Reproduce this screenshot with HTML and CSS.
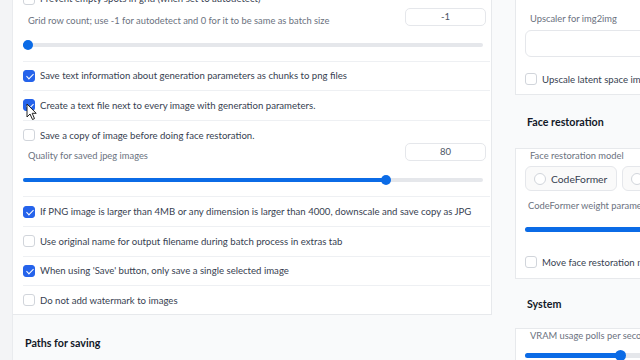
FILE: index.html
```html
<!DOCTYPE html>
<html>
<head>
<meta charset="utf-8">
<link rel="stylesheet" href="styles.css">
</head>
<body>
<div class="page">
  <div class="rail"></div>
  <div class="leftcol">
    <div class="box">
      <div class="row first"><span class="cb"></span><span class="txt">Prevent empty spots in grid (when set to autodetect)</span></div>
      <div class="sblock">
        <div class="shead"><span class="slabel">Grid row count; use -1 for autodetect and 0 for it to be same as batch size</span><span class="num">-1</span></div>
        <div class="track"><div class="fill" style="width:5px"></div><div class="thumb" style="left:0px"></div></div>
      </div>
      <div class="row line"><span class="cb on"></span><span class="txt">Save text information about generation parameters as chunks to png files</span></div>
      <div class="row line"><span class="cb on"></span><span class="txt">Create a text file next to every image with generation parameters.</span>
        <svg class="cursor" width="12" height="18" viewBox="0 0 12 18"><path d="M1 1 L1 14 L4 11 L6.5 16.5 L8.5 15.6 L6.2 10.3 L10.2 10.3 Z" fill="#fff" stroke="#222" stroke-width="1" stroke-linejoin="round"/></svg>
      </div>
      <div class="row line"><span class="cb"></span><span class="txt">Save a copy of image before doing face restoration.</span></div>
      <div class="sblock">
        <div class="shead"><span class="slabel">Quality for saved jpeg images</span><span class="num">80</span></div>
        <div class="track"><div class="fill" style="width:363px"></div><div class="thumb" style="left:358px"></div></div>
      </div>
      <div class="row line"><span class="cb on"></span><span class="txt">If PNG image is larger than 4MB or any dimension is larger than 4000, downscale and save copy as JPG</span></div>
      <div class="row line"><span class="cb"></span><span class="txt">Use original name for output filename during batch process in extras tab</span></div>
      <div class="row line"><span class="cb on"></span><span class="txt">When using 'Save' button, only save a single selected image</span></div>
      <div class="row line"><span class="cb"></span><span class="txt">Do not add watermark to images</span></div>
    </div>
    <div class="sect lsect">Paths for saving</div>
  </div>
  <div class="gap"></div>
  <div class="rightcol">
    <div class="panel p1">
      <div class="plabel">Upscaler for img2img</div>
      <div class="dropdown"></div>
      <div class="prow"><span class="cb"></span><span class="txt">Upscale latent space image when doing hires. fix</span></div>
    </div>
    <div class="sect s1">Face restoration</div>
    <div class="panel p2">
      <div class="plabel">Face restoration model</div>
      <div class="radios">
        <div class="radio"><span class="dot"></span><span class="txt">CodeFormer</span></div>
        <div class="radio"><span class="dot"></span><span class="txt">GFPGAN</span></div>
      </div>
      <div class="plabel wl">CodeFormer weight parameter; 0 = maximum effect; 1 = minimum effect</div>
      <div class="ptrack"><div class="pfill" style="width:150px"></div></div>
      <div class="prow mv"><span class="cb"></span><span class="txt">Move face restoration model from VRAM into RAM after processing</span></div>
    </div>
    <div class="sect s2">System</div>
    <div class="panel p3">
      <div class="plabel">VRAM usage polls per second during generation. Set to 0 to disable.</div>
      <div class="ptrack"><div class="pfill" style="width:96px"></div><div class="pthumb" style="left:90px"></div></div>
    </div>
  </div>
</div>
</body>
</html>
```
FILE: styles.css
```css
* { box-sizing: border-box; }
html, body { margin: 0; padding: 0; }
body {
  width: 640px; height: 360px; overflow: hidden;
  background: #f9fafb;
  font-family: Lato, "Liberation Sans", sans-serif;
  font-size: 9.6px;
  color: #374151;
}
.page { display: flex; height: 360px; }
.rail { width: 13px; flex: none; background: #f3f4f6; border-right: 1px solid #e9ebee; }
.leftcol { width: 479px; flex: none; }
.box {
  background: #fff;
  border-right: 1px solid #e7e9ec;
  border-bottom: 1px solid #e7e9ec;
  margin-top: -16px;
  padding: 0 0 0 10px;
  height: 331px;
}
.row {
  height: 29.6px; display: flex; align-items: center; position: relative;
  margin-right: 1px;
}
.row.line { border-top: 1px solid #eef0f3; }
.row .txt { margin-left: 5px; white-space: nowrap; }
.cb {
  width: 12px; height: 12px; flex: none;
  border: 1px solid #d1d5db; border-radius: 3px; background: #fff;
  position: relative;
}
.cb.on { background: #2563eb; border-color: #2563eb; }
.cb.on::after {
  content: ""; position: absolute; left: 3.5px; top: 1.2px;
  width: 3px; height: 6px; border: solid #fff; border-width: 0 1.6px 1.6px 0;
  transform: rotate(45deg);
}
.cursor { position: absolute; left: 3px; top: 12px; }
.sblock { height: 47px; padding: 0 8px 0 0; }
.shead { display: flex; align-items: flex-start; justify-content: space-between; height: 25px; padding-left: 5px; }
.slabel { color: #6b7280; font-size: 9.35px; line-height: 14px; white-space: nowrap; }
.num {
  width: 81px; height: 18px; margin-top: -6px; margin-right: -3px;
  border: 1px solid #e5e7eb; border-radius: 5px; background: #fff;
  text-align: center; line-height: 16px; color: #4b5563; font-size: 9.5px;
}
.track {
  position: relative; height: 4px; margin: 4px 0 0 0; width: 460px;
  background: #e5e7eb; border-radius: 2px;
}
.fill { position: absolute; left: 0; top: 0; bottom: 0; background: #0b6be6; border-radius: 2px; }
.thumb {
  position: absolute; top: -3px; width: 10px; height: 10px; border-radius: 50%;
  background: #0b6be6;
}
.sect {
  display: flex; align-items: center; padding-left: 12px;
  font-weight: 700; font-size: 10.7px; color: #111827;
}
.lsect { height: 54px; }
.s1 { height: 53px; }
.s2 { height: 49px; }
.gap { width: 23px; flex: none; }
.rightcol { width: 200px; flex: none; }
.panel {
  background: #fff; border: 1px solid #e7e9ec; border-right: none;
  padding: 0 0 0 9px;
}
.p1 { margin-top: -10px; height: 105px; padding-top: 21px; }
.plabel { color: #6b7280; font-size: 9.35px; white-space: nowrap; padding-left: 5px; line-height: 14px; }
.dropdown { height: 27px; margin-top: 4px; border: 1px solid #e5e7eb; border-radius: 6px; background: #fff; }
.prow { display: flex; align-items: center; margin-top: 16px; }
.prow .txt { margin-left: 5px; white-space: nowrap; }
.p2 { height: 131px; }
.radios { display: flex; gap: 5px; margin-top: 3px; }
.radio {
  display: flex; align-items: center; height: 25px; padding: 0 9px 0 8px;
  border: 1px solid #e5e7eb; border-radius: 6px; background: #fafafa; white-space: nowrap;
  color: #374151; font-size: 10.3px;
}
.dot { width: 12px; height: 12px; border: 1px solid #d1d5db; border-radius: 50%; background: #fff; margin-right: 5px; }
.wl { margin-top: 8px; padding-left: 3px; }
.ptrack { position: relative; height: 5px; margin-top: 13.5px; background: #e5e7eb; border-radius: 3px; }
.pfill { position: absolute; left: 0; top: 0; bottom: 0; background: #0b6be6; border-radius: 3px; }
.pthumb { position: absolute; top: -3px; width: 11px; height: 11px; border-radius: 50%; background: #0b6be6; }
.mv { margin-top: 24.5px; }
.p3 { height: 60px; padding-top: 0; }
.p3 .ptrack { margin-top: 9.5px; }
```
